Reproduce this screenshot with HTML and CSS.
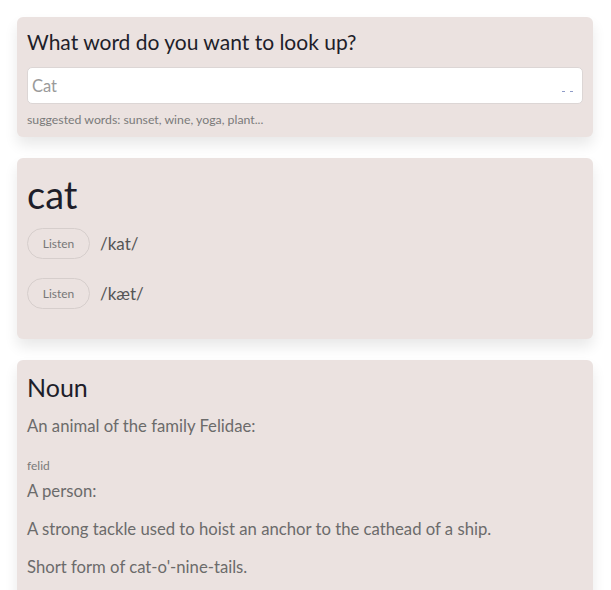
FILE: index.html
```html
<!DOCTYPE html>
<html lang="en">
<head>
<meta charset="utf-8">
<title>Dictionary</title>
<link rel="stylesheet" href="styles.css">
</head>
<body>
<main class="app">
  <section class="card search">
    <h1 class="search-title">What word do you want to look up?</h1>
    <div class="field">
      <input class="search-input" type="search" placeholder="Cat">
      <span class="field-dots"><i></i><i></i></span>
    </div>
    <p class="hint">suggested words: sunset, wine, yoga, plant...</p>
  </section>

  <section class="card word">
    <h2 class="word-title">cat</h2>
    <div class="phonetic">
      <button class="listen" type="button">Listen</button>
      <span class="ipa">/kat/</span>
    </div>
    <div class="phonetic">
      <button class="listen" type="button">Listen</button>
      <span class="ipa">/kæt/</span>
    </div>
  </section>

  <section class="card meaning-card">
    <h3 class="pos">Noun</h3>
    <div class="meaning with-example">
      <p class="def">An animal of the family Felidae:</p>
      <p class="example">felid</p>
    </div>
    <div class="meaning">
      <p class="def">A person:</p>
    </div>
    <div class="meaning">
      <p class="def">A strong tackle used to hoist an anchor to the cathead of a ship.</p>
    </div>
    <div class="meaning">
      <p class="def">Short form of cat-o'-nine-tails.</p>
    </div>
  </section>
</main>
</body>
</html>
```

FILE: styles.css
```css
* { box-sizing: border-box; }

html, body {
  margin: 0;
  background: #ffffff;
}

body {
  font-family: "Lato", "Noto Sans", sans-serif;
  color: #6b6b6b;
}

.app {
  padding: 17px 18px 0 17px;
  display: flex;
  flex-direction: column;
  gap: 21px;
}

.card {
  background: #ebe2e0;
  border-radius: 6px;
  padding: 12px 10px;
  box-shadow: 0 8px 14px rgba(0, 0, 0, 0.09);
}

/* search card */
.search {
  padding-bottom: 10px;
}

.search-title {
  margin: 0;
  font-size: 21px;
  line-height: 26px;
  font-weight: 400;
  color: #1e1e2a;
}

.field {
  position: relative;
  margin-top: 12px;
}

.search-input {
  display: block;
  width: 100%;
  height: 37px;
  border: 1px solid #dcd6d5;
  border-radius: 5px;
  background: #fff;
  padding: 0 4px;
  font-family: inherit;
  font-size: 16.5px;
  color: #444;
  outline: none;
}

.search-input::placeholder { color: #9a9a9a; }

.field-dots {
  position: absolute;
  right: 10px;
  top: 24px;
  display: flex;
  gap: 5px;
}

.field-dots i {
  width: 3px;
  height: 1px;
  background: #8f9cc8;
}

.hint {
  margin: 8px 0 0;
  font-size: 12.3px;
  line-height: 15px;
  color: #7a7a7a;
}

/* word card */
.word {
  padding-bottom: 30px;
}

.word-title {
  margin: 2px 0 12px;
  font-size: 38px;
  line-height: 44px;
  font-weight: 400;
  color: #1e1e2a;
}

.phonetic {
  display: flex;
  align-items: center;
  gap: 10px;
}

.phonetic + .phonetic { margin-top: 19px; }

.listen {
  width: 63px;
  height: 31px;
  border: 1px solid #d6cecc;
  border-radius: 16px;
  background: transparent;
  font-family: inherit;
  font-size: 12px;
  color: #777;
  padding: 0;
}

.ipa {
  font-size: 17px;
  color: #555;
}

/* meaning card */
.pos {
  margin: 0 0 13px;
  font-size: 25px;
  line-height: 30px;
  font-weight: 400;
  color: #1e1e2a;
}

.meaning { margin-bottom: 16px; }
.meaning.with-example { margin-bottom: 6px; }

.def {
  margin: 0;
  font-size: 16.7px;
  line-height: 22px;
  color: #6b6b6b;
}

.example {
  margin: 21px 0 0;
  font-size: 12px;
  line-height: 16px;
  color: #7a7a7a;
}
```
